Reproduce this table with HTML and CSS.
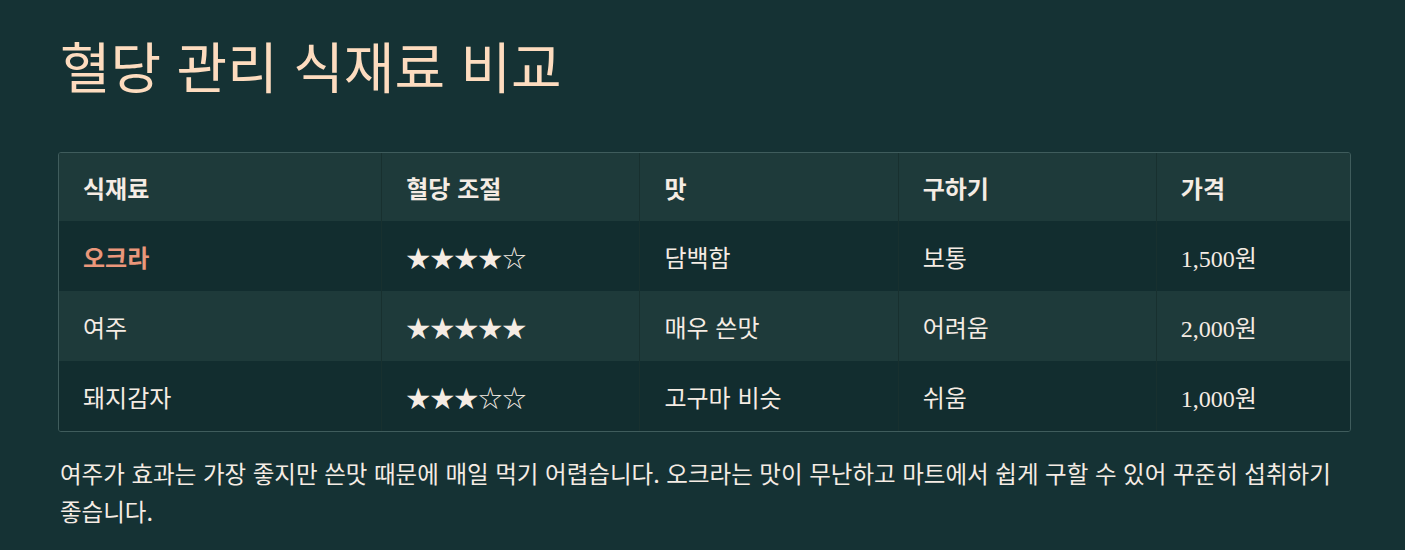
FILE: index.html
```html
<!DOCTYPE html>
<html lang="ko">
<head>
<meta charset="utf-8">
<title>혈당 관리 식재료 비교</title>
<link rel="stylesheet" href="styles.css">
</head>
<body>
<main class="page">
  <h1 class="title">혈당 관리 식재료 비교</h1>
  <div class="table-wrap">
    <table class="compare">
      <colgroup>
        <col class="c-name"><col class="c-mid"><col class="c-mid"><col class="c-mid"><col class="c-price">
      </colgroup>
      <thead>
        <tr><th>식재료</th><th>혈당 조절</th><th>맛</th><th>구하기</th><th>가격</th></tr>
      </thead>
      <tbody>
        <tr><td class="hl">오크라</td><td class="stars">★★★★☆</td><td>담백함</td><td>보통</td><td class="num">1,500원</td></tr>
        <tr><td>여주</td><td class="stars">★★★★★</td><td>매우 쓴맛</td><td>어려움</td><td class="num">2,000원</td></tr>
        <tr><td>돼지감자</td><td class="stars">★★★☆☆</td><td>고구마 비슷</td><td>쉬움</td><td class="num">1,000원</td></tr>
      </tbody>
    </table>
  </div>
  <p class="note">여주가 효과는 가장 좋지만 쓴맛 때문에 매일 먹기 어렵습니다. 오크라는 맛이 무난하고 마트에서 쉽게 구할 수 있어 꾸준히 섭취하기 좋습니다.</p>
</main>
</body>
</html>
```

FILE: styles.css
```css
html, body {
  margin: 0;
  padding: 0;
  background: #153234;
}
body {
  font-family: "Noto Sans CJK KR", sans-serif;
  color: #f5ece4;
}
.page {
  padding: 30px 54px 0 58px;
}
.title {
  margin: 0 0 0 2px;
  font-weight: 400;
  font-size: 55px;
  line-height: 68px;
  color: #fddcbf;
}
.table-wrap {
  margin-top: 54px;
  border: 1px solid #3f5c5c;
  border-radius: 3px;
  overflow: hidden;
}
.compare {
  width: 100%;
  border-collapse: collapse;
  font-size: 24px;
}
.c-name { width: 25%; }
.c-mid { width: 20%; }
.c-price { width: 15%; }
.compare th, .compare td {
  text-align: left;
  padding: 0 24px;
  height: 70px;
  border-left: 1px solid #18302f;
}
.compare th:first-child, .compare td:first-child { border-left: none; }
.compare th {
  font-weight: 700;
  background: #1e3a3a;
  height: 68px;
}
.compare tbody tr:nth-child(odd) td { background: #122d2f; }
.compare tbody tr:nth-child(even) td { background: #1e3a3a; }
.compare td.num { font-family: "Liberation Serif", "Noto Sans CJK KR", serif; }
.compare td.hl { color: #ea977b; font-weight: 700; }
.note {
  margin: 22px 0 0 2px;
  font-size: 23.5px;
  line-height: 38px;
  word-break: keep-all;
}
```
